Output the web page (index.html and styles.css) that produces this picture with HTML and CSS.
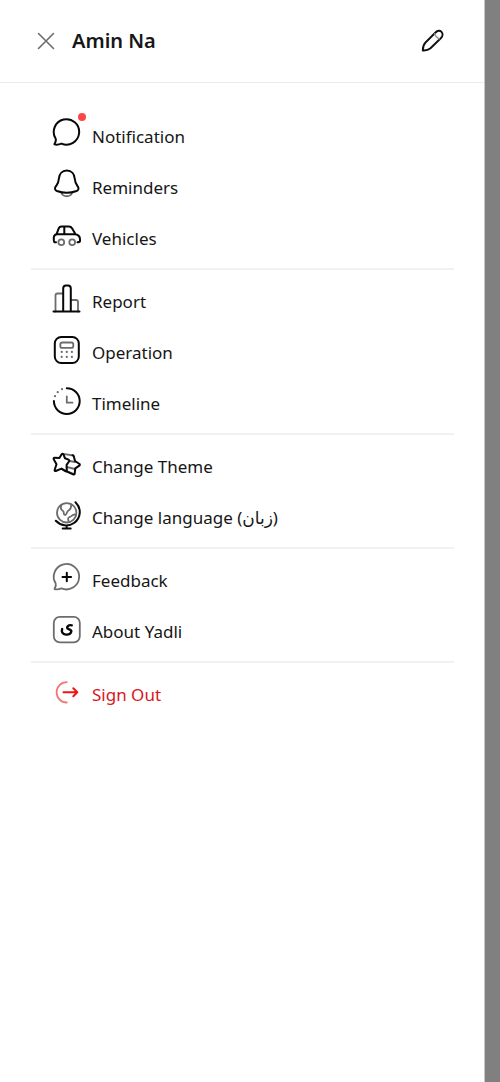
FILE: index.html
```html
<!DOCTYPE html>
<html lang="en">
<head>
<meta charset="utf-8">
<meta name="viewport" content="width=device-width, initial-scale=1">
<title>Yadli menu</title>
<link rel="stylesheet" href="styles.css">
</head>
<body>
<aside class="drawer">
  <header class="header">
    <button class="icon-button close" type="button" aria-label="Close menu">
      <svg class="glyph soft" viewBox="0 0 24 24"><path d="M4.500 4.500l15 15M19.500 4.500l-15 15"/></svg>
    </button>
    <h1 class="name">Amin Na</h1>
    <button class="icon-button" type="button" aria-label="Edit profile">
      <svg class="glyph bold" viewBox="0 0 24 24"><path d="M1.800 21.500C1.800 18 2.500 15.500 4.500 13.500L14.500 3.500C16.500 1.300 19 1.300 20.500 2.800S22 7 20 9L9.500 19.300C7.500 21 5 21.700 1.800 21.500z"/><path class="soft" d="M13.800 4.800c.5 2.500 2 4 4.500 5"/></svg>
    </button>
  </header>
  <nav class="menu" aria-label="Main menu">
    <ul class="group">
      <li><a class="item" href="#notification">
        <span class="item-icon"><svg viewBox="0 0 32 32"><path d="M4.600 21.500A12.700 12.700 0 1 1 10.500 26.600C8 27.600 5.500 28 3.500 27.300 3 26.800 5.800 24.500 4.600 21.500z"/></svg><span class="badge"></span></span>
        Notification</a></li>
      <li><a class="item" href="#reminders">
        <span class="item-icon"><svg viewBox="0 0 32 32"><path class="soft" d="M10.500 25c1.500 4.300 9 4.300 10.500 0"/><path d="M15.800 2.500C11 2.500 8.200 6 7.900 10.500 7.700 15 6.500 16 4.500 18.800 3.500 20.500 4 22.200 6 23 12 25.200 19.500 25.200 25.500 23 27.500 22.200 28 20.500 27 18.800 25 16 24 15 23.700 10.500 23.400 6 20.600 2.500 15.800 2.500z"/></svg></span>
        Reminders</a></li>
      <li><a class="item" href="#vehicles">
        <span class="item-icon"><svg viewBox="0 0 32 32"><path d="M5 23.300H3.500Q2.800 23 2.800 21V18.500Q3 15.500 6 15.300H23.500C27.500 15.500 29 17.500 29 20.500V22Q28.800 23.300 26.500 23.300M5.500 15.300L7.500 9.800Q8.300 7.500 10.500 7.500H18Q20 7.500 21.200 9.500L24.500 15.300M13.300 7.500V15.300"/><g class="soft"><circle cx="10.300" cy="23.200" r="2.900"/><circle cx="21.200" cy="23.200" r="2.900"/></g></svg></span>
        Vehicles</a></li>
    </ul>
    <ul class="group">
      <li><a class="item" href="#report">
        <span class="item-icon"><svg viewBox="0 0 32 32"><path class="soft" d="M4.500 29.500V13.500Q4.500 11.500 6.500 11.500H12M20 18H25Q27 18 27 20V29.500"/><path d="M2.500 29.500H28.500M12.200 29.500V6.500Q12.200 3.500 15 3.500H17Q19.800 3.500 19.800 6.500V29.500"/></svg></span>
        Report</a></li>
      <li><a class="item" href="#operation">
        <span class="item-icon"><svg viewBox="0 0 32 32"><rect x="3.800" y="4" width="24" height="26" rx="6.500"/><rect class="soft" x="9.300" y="9.500" width="13" height="5.400" rx="2"/><path class="dots soft" d="M10.700 18.900h.01M15.800 18.900h.01M20.900 18.900h.01M10.700 23.900h.01M15.800 23.900h.01M20.900 23.900h.01"/></svg></span>
        Operation</a></li>
      <li><a class="item" href="#timeline">
        <span class="item-icon"><svg viewBox="0 0 32 32"><path d="M15.800 4.200A12.900 12.900 0 1 1 2.900 17.100"/><path class="dots soft" d="M11 5.200h.01M6.700 8.200h.01M4 12.200h.01"/><path class="soft" d="M15.800 12.500V18.700H21.500"/></svg></span>
        Timeline</a></li>
    </ul>
    <ul class="group">
      <li><a class="item" href="#theme">
        <span class="item-icon"><svg viewBox="0 0 32 32"><path class="soft" d="M12 6.800L22.500 8.500M18.500 14L24 15M15.500 20L24 22M11.500 22.300L23 27"/><path d="M11.500 6.800Q12.200 6.800 12.700 7.800L14 11.300 17.500 12.600Q18.800 13.300 18 14.500L15.600 17.800 15.800 23.500Q15.500 24.800 14.300 24.200L10.500 21.600 4.800 24Q3.300 24.300 3.700 22.800L5.500 17.300 2.700 12.300Q2.300 10.800 3.700 10.800L8.400 11.100 10.500 7.500Q11 6.800 11.500 6.800z"/><path d="M21.500 8.300Q22.500 8.300 22.800 9.300L24 14 28.500 17Q29.300 17.900 28.300 18.600L24.300 21.300 23.700 26.600Q23.300 27.900 22 27.300L16 24.600"/></svg></span>
        Change Theme</a></li>
      <li><a class="item" href="#language">
        <span class="item-icon"><svg viewBox="0 0 32 32"><g class="soft"><circle cx="15.700" cy="14.800" r="9.700"/><path d="M10.500 7C9 10.500 10 12 12 13 13.500 14 12 17 14 17S15.500 13.500 17.500 12.500 20.500 9.500 20 6.500M25 17C22 15 20.500 19 18.500 19 16.500 19.500 17 22 18 24"/></g><path d="M24.500 4.200C30.800 10.500 30 20 23 25 17 29.100 9.500 27.800 4.800 22.800M15.700 28V30.500M11.700 30.500H19.700"/></svg></span>
        <span>Change language (<bdi lang="fa">زبان</bdi>)</span></a></li>
    </ul>
    <ul class="group">
      <li><a class="item" href="#feedback">
        <span class="item-icon"><svg viewBox="0 0 32 32"><path class="soft" d="M4.600 22.300A12.700 12.700 0 1 1 10.500 27.400C8 28.400 5.500 28.800 3.500 28.100 3 27.600 5.800 25.300 4.600 22.300z"/><path d="M15.800 11.700V20.300M11.500 16H20.100"/></svg></span>
        Feedback</a></li>
      <li><a class="item" href="#about">
        <span class="item-icon"><svg viewBox="0 0 32 32"><rect class="soft" x="2.800" y="4.800" width="26" height="25.500" rx="6"/><path class="heavy" d="M20.800 13.300C17.500 12.500 15 15 16.700 16.500 18 17.500 20.700 17.500 20.300 19.500 19.800 21.800 17.500 22.800 15 22.600 11.500 22.200 10 19.800 11.200 17"/></svg></span>
        About Yadli</a></li>
    </ul>
    <ul class="group">
      <li><a class="item danger" href="#signout">
        <span class="item-icon"><svg viewBox="0 0 32 32"><path class="soft" d="M15.800 7.100A10.200 10.200 0 0 0 15.800 27.500"/><path d="M12.500 17.300H26.300M22.300 13.300L26.300 17.300 22.300 21.300"/></svg></span>
        Sign Out</a></li>
    </ul>
  </nav>
</aside>
</body>
</html>
```
FILE: styles.css
```css
* {
  box-sizing: border-box;
}

body {
  margin: 0;
  background: #808080;
  color: #161616;
  font-family: "Noto Sans", "Open Sans", "DejaVu Sans", sans-serif;
}

.drawer {
  min-height: 100vh;
  margin-right: 15px;
  border-right: 1px solid #c8c8c8;
  background: #fff;
}

.header {
  display: flex;
  align-items: center;
  gap: 14px;
  height: 83px;
  padding: 0 39px 0 34px;
  border-bottom: 1px solid #ebebeb;
}

.name {
  flex: 1;
  margin: 0;
  font-size: 20px;
  font-weight: 600;
  line-height: 28px;
}

.icon-button {
  display: flex;
  padding: 0;
  border: 0;
  background: none;
  color: #111;
  cursor: pointer;
}

svg {
  display: block;
  width: 32px;
  height: 32px;
  fill: none;
  stroke: currentColor;
  stroke-width: 2;
  stroke-linecap: round;
  stroke-linejoin: round;
}

.soft {
  stroke: #6c6c6c;
  stroke-width: 1.8;
}

.glyph {
  width: 24px;
  height: 24px;
  stroke-width: 1.6;
}

.bold {
  stroke-width: 1.9;
}

.bold .soft {
  stroke: #999;
  stroke-width: 1.4;
}

.dots {
  stroke-width: 2.2;
}

.heavy {
  stroke-width: 2.4;
}

.menu {
  padding: 28px 30px 0 31px;
}

.group {
  margin: 0;
  padding: 0 0 4px;
  list-style: none;
}

.group + .group {
  padding-top: 6px;
  border-top: 2px solid #f1f1f1;
}

.item {
  display: flex;
  align-items: center;
  gap: 9px;
  height: 51px;
  padding-left: 20px;
  color: inherit;
  font-size: 17px;
  line-height: 24px;
  text-decoration: none;
}

.item-icon {
  position: relative;
  margin-bottom: 7px;
  color: #080808;
}

.badge {
  position: absolute;
  top: -4px;
  right: -3px;
  width: 8px;
  height: 8px;
  border-radius: 50%;
  background: #ff4545;
}

.danger {
  color: #d9161c;
}

.danger .item-icon {
  color: #f01414;
}

.danger .soft {
  stroke: #f47777;
}
```
